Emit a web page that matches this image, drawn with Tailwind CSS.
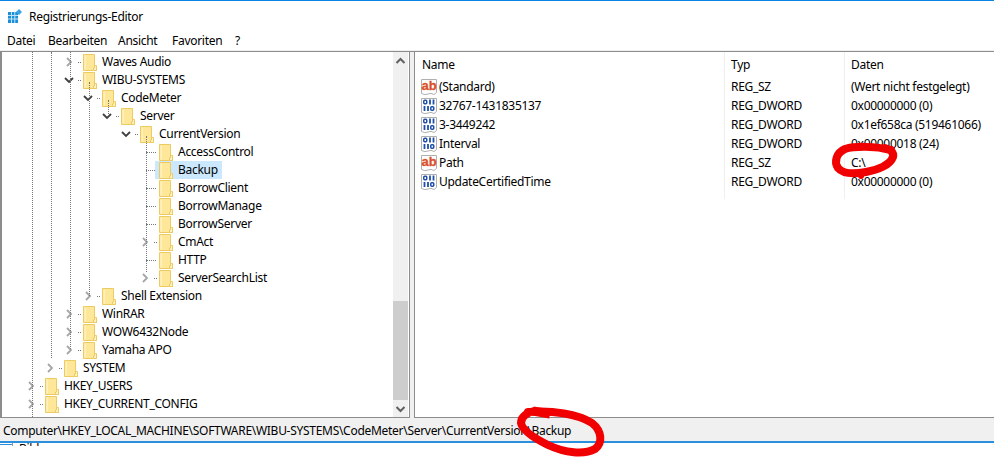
<!doctype html>
<html lang="de"><head><meta charset="utf-8"><title>Registrierungs-Editor</title>
<script src="https://cdn.jsdelivr.net/npm/@tailwindcss/browser@4"></script></head>
<body class="bg-white overflow-hidden">
<svg width="0" height="0" class="absolute"><defs>
<symbol id="f" viewBox="0 0 14 17"><path d="M.5.5H11.5V14H13.5V16.5H.5Z" fill="#ffe79a" stroke="#eccb62"/><path d="M11.5 11.5H13.5V16.5H10.5V14H11.5Z" fill="#fff3c4" stroke="#eccb62"/><path d="M1.5 1.5H3V15.5H1.5Z" fill="#fff2c0"/></symbol>
<symbol id="r" viewBox="0 0 12 12"><path d="M4 2L8 6L4 10" fill="none" stroke="#a6a6a6" stroke-width="1.8"/></symbol>
<symbol id="d" viewBox="0 0 12 12"><path d="M2 4L6 8L10 4" fill="none" stroke="#404040" stroke-width="1.8"/></symbol>
<symbol id="ab" viewBox="0 0 16 16"><path d="M.5 .5H15.500V13.500L13 15.500Q10 13.500 7 15T.5 14.500Z" fill="#fff" stroke="#b0b0b0"/><text x="8" y="10.500" text-anchor="middle" letter-spacing="0" font-family="Liberation Sans" font-weight="700" font-size="13" stroke="#d9512c" stroke-width="0.300" fill="#d9512c">ab</text></symbol>
<symbol id="b" viewBox="0 0 16 16"><path d="M.5 .5H15.500V13.500L13 15.500Q10 13.500 7 15T.5 14.500Z" fill="#fff" stroke="#b0b0b0"/><rect x="2.750" y="2.250" width="3" height="3.500" rx="1" fill="none" stroke="#1f4fa8" stroke-width="1.500"/><path d="M9 1.500V6.500M12.500 1.500V6.500M3.500 8V13M7 8V13" fill="none" stroke="#1f4fa8" stroke-width="1.800"/><rect x="9.750" y="8.750" width="3" height="3.500" rx="1" fill="none" stroke="#1f4fa8" stroke-width="1.500"/></symbol>
</defs></svg>
<div class="relative w-[994px] h-[458px] flex flex-col text-[12px] leading-[18px] tracking-[-0.29px] text-[#000] font-['Noto_Sans','Liberation_Sans',sans-serif]">
  <div class="h-px bg-[#0a84e0]"></div>
  <header class="h-[31px] flex items-center pl-2 gap-[7px]">
    <svg width="14" height="15" viewBox="0 0 14 15"><path d="M0 3H10V14H0Z" fill="#1c8fd8"/><path d="M3.500 3V14M6.800 3V14M0 6.500H10M0 10H10" stroke="#bfe4f8" stroke-width="1"/><path d="M11 0L14 3L11 6L8 3Z" fill="#3aa3e3"/></svg>
    <span>Registrierungs-Editor</span>
  </header>
  <nav class="h-[18px] flex items-center pl-[7px]">
    <span class="w-[41px]">Datei</span><span class="w-[70px]">Bearbeiten</span><span class="w-[54px]">Ansicht</span><span class="w-[63px]">Favoriten</span><span>?</span>
  </nav>
  <div class="h-px bg-[#f0f0f0]"></div>
  <main class="h-[367px] flex border-t border-[#8c8c8c] bg-[#f0f0f0]">
    <section class="relative w-[410px] bg-white border-l-2 border-r border-b border-[#8c8c8c] overflow-hidden">
      <div class="absolute top-0 left-[30px] h-[365px] border-l border-dotted border-[#777]"></div>
      <div class="absolute top-0 left-[49px] h-[306px] border-l border-dotted border-[#777]"></div>
      <div class="absolute top-0 left-[68px] h-[297px] border-l border-dotted border-[#777]"></div>
      <div class="absolute top-[30px] left-[87px] h-[214px] border-l border-dotted border-[#777]"></div>
      <div class="absolute top-[48px] left-[106px] h-[16px] border-l border-dotted border-[#777]"></div>
      <div class="absolute top-[84px] left-[144px] h-[136px] border-l border-dotted border-[#777]"></div>
      <div class="flex flex-col pt-px">
        <div class="h-[18px] flex items-center pl-[61px]"><svg class="w-3 h-3"><use href="#r"/></svg><i class="w-[3px] ml-[3px] border-t border-dotted border-[#777]"></i><svg class="w-[14px] h-[17px] ml-[2px]"><use href="#f"/></svg><span class="ml-[5px]">Waves Audio</span></div>
        <div class="h-[18px] flex items-center pl-[61px]"><svg class="w-3 h-3"><use href="#d"/></svg><i class="w-[3px] ml-[3px] border-t border-dotted border-[#777]"></i><svg class="w-[14px] h-[17px] ml-[2px]"><use href="#f"/></svg><span class="ml-[5px]">WIBU-SYSTEMS</span></div>
        <div class="h-[18px] flex items-center pl-[80px]"><svg class="w-3 h-3"><use href="#d"/></svg><i class="w-[3px] ml-[3px] border-t border-dotted border-[#777]"></i><svg class="w-[14px] h-[17px] ml-[2px]"><use href="#f"/></svg><span class="ml-[5px]">CodeMeter</span></div>
        <div class="h-[18px] flex items-center pl-[99px]"><svg class="w-3 h-3"><use href="#d"/></svg><i class="w-[3px] ml-[3px] border-t border-dotted border-[#777]"></i><svg class="w-[14px] h-[17px] ml-[2px]"><use href="#f"/></svg><span class="ml-[5px]">Server</span></div>
        <div class="h-[18px] flex items-center pl-[118px]"><svg class="w-3 h-3"><use href="#d"/></svg><i class="w-[3px] ml-[3px] border-t border-dotted border-[#777]"></i><svg class="w-[14px] h-[17px] ml-[2px]"><use href="#f"/></svg><span class="ml-[5px]">CurrentVersion</span></div>
        <div class="h-[18px] flex items-center pl-[144px]"><i class="w-[10px] border-t border-dotted border-[#777]"></i><svg class="w-[14px] h-[17px] ml-[3px]"><use href="#f"/></svg><span class="ml-[5px]">AccessControl</span></div>
        <div class="h-[18px] flex items-center pl-[144px]"><i class="w-[9px] border-t border-dotted border-[#777]"></i><span class="flex items-center bg-[#cce8ff] h-[18px] pl-[4px] pr-[4px]"><svg class="w-[14px] h-[17px]"><use href="#f"/></svg><span class="ml-[5px]">Backup</span></span></div>
        <div class="h-[18px] flex items-center pl-[144px]"><i class="w-[10px] border-t border-dotted border-[#777]"></i><svg class="w-[14px] h-[17px] ml-[3px]"><use href="#f"/></svg><span class="ml-[5px]">BorrowClient</span></div>
        <div class="h-[18px] flex items-center pl-[144px]"><i class="w-[10px] border-t border-dotted border-[#777]"></i><svg class="w-[14px] h-[17px] ml-[3px]"><use href="#f"/></svg><span class="ml-[5px]">BorrowManage</span></div>
        <div class="h-[18px] flex items-center pl-[144px]"><i class="w-[10px] border-t border-dotted border-[#777]"></i><svg class="w-[14px] h-[17px] ml-[3px]"><use href="#f"/></svg><span class="ml-[5px]">BorrowServer</span></div>
        <div class="h-[18px] flex items-center pl-[137px]"><svg class="w-3 h-3"><use href="#r"/></svg><i class="w-[3px] ml-[3px] border-t border-dotted border-[#777]"></i><svg class="w-[14px] h-[17px] ml-[2px]"><use href="#f"/></svg><span class="ml-[5px]">CmAct</span></div>
        <div class="h-[18px] flex items-center pl-[144px]"><i class="w-[10px] border-t border-dotted border-[#777]"></i><svg class="w-[14px] h-[17px] ml-[3px]"><use href="#f"/></svg><span class="ml-[5px]">HTTP</span></div>
        <div class="h-[18px] flex items-center pl-[137px]"><svg class="w-3 h-3"><use href="#r"/></svg><i class="w-[3px] ml-[3px] border-t border-dotted border-[#777]"></i><svg class="w-[14px] h-[17px] ml-[2px]"><use href="#f"/></svg><span class="ml-[5px]">ServerSearchList</span></div>
        <div class="h-[18px] flex items-center pl-[80px]"><svg class="w-3 h-3"><use href="#r"/></svg><i class="w-[3px] ml-[3px] border-t border-dotted border-[#777]"></i><svg class="w-[14px] h-[17px] ml-[2px]"><use href="#f"/></svg><span class="ml-[5px]">Shell Extension</span></div>
        <div class="h-[18px] flex items-center pl-[61px]"><svg class="w-3 h-3"><use href="#r"/></svg><i class="w-[3px] ml-[3px] border-t border-dotted border-[#777]"></i><svg class="w-[14px] h-[17px] ml-[2px]"><use href="#f"/></svg><span class="ml-[5px]">WinRAR</span></div>
        <div class="h-[18px] flex items-center pl-[61px]"><svg class="w-3 h-3"><use href="#r"/></svg><i class="w-[3px] ml-[3px] border-t border-dotted border-[#777]"></i><svg class="w-[14px] h-[17px] ml-[2px]"><use href="#f"/></svg><span class="ml-[5px]">WOW6432Node</span></div>
        <div class="h-[18px] flex items-center pl-[61px]"><svg class="w-3 h-3"><use href="#r"/></svg><i class="w-[3px] ml-[3px] border-t border-dotted border-[#777]"></i><svg class="w-[14px] h-[17px] ml-[2px]"><use href="#f"/></svg><span class="ml-[5px]">Yamaha APO</span></div>
        <div class="h-[18px] flex items-center pl-[42px]"><svg class="w-3 h-3"><use href="#r"/></svg><i class="w-[3px] ml-[3px] border-t border-dotted border-[#777]"></i><svg class="w-[14px] h-[17px] ml-[2px]"><use href="#f"/></svg><span class="ml-[5px]">SYSTEM</span></div>
        <div class="h-[18px] flex items-center pl-[23px]"><svg class="w-3 h-3"><use href="#r"/></svg><i class="w-[3px] ml-[3px] border-t border-dotted border-[#777]"></i><svg class="w-[14px] h-[17px] ml-[2px]"><use href="#f"/></svg><span class="ml-[5px]">HKEY_USERS</span></div>
        <div class="h-[18px] flex items-center pl-[23px]"><svg class="w-3 h-3"><use href="#r"/></svg><i class="w-[3px] ml-[3px] border-t border-dotted border-[#777]"></i><svg class="w-[14px] h-[17px] ml-[2px]"><use href="#f"/></svg><span class="ml-[5px]">HKEY_CURRENT_CONFIG</span></div>
      </div>
      <div class="absolute top-0 right-px bottom-0 w-[15px] bg-[#f0f0f0] flex flex-col items-center justify-between">
        <svg class="w-[15px] h-[17px] mt-px" viewBox="0 0 15 17"><path d="M3.500 10L7.500 6L11.500 10" fill="none" stroke="#606060" stroke-width="2"/></svg>
        <div class="absolute top-[249px] left-0 w-full h-[99px] bg-[#cdcdcd]"></div>
        <svg class="w-[15px] h-[17px]" viewBox="0 0 15 17"><path d="M3.500 7L7.500 11L11.500 7" fill="none" stroke="#606060" stroke-width="2"/></svg>
      </div>
    </section>
    <section class="relative w-[580px] ml-[4px] grow bg-white border-l border-b border-[#8c8c8c]">
      <div class="absolute top-0 left-[309px] h-[147px] border-l border-[#f0f0f0]"></div>
      <div class="absolute top-0 left-[429px] h-[147px] border-l border-[#f0f0f0]"></div>
      <div class="grid grid-cols-[309px_120px_1fr] h-[25px] items-center">
        <span class="pl-[7px]">Name</span><span class="pl-[7px]">Typ</span><span class="pl-[7px]">Daten</span>
      </div>
      <div class="grid grid-cols-[309px_120px_1fr] auto-rows-[19px] items-center">
        <span class="flex items-center pl-[6px]"><svg class="w-4 h-4"><use href="#ab"/></svg><span class="ml-[2px]">(Standard)</span></span><span class="pl-[7px]">REG_SZ</span><span class="pl-[7px]">(Wert nicht festgelegt)</span>
        <span class="flex items-center pl-[6px]"><svg class="w-4 h-4"><use href="#b"/></svg><span class="ml-[2px]">32767-1431835137</span></span><span class="pl-[7px]">REG_DWORD</span><span class="pl-[7px]">0x00000000 (0)</span>
        <span class="flex items-center pl-[6px]"><svg class="w-4 h-4"><use href="#b"/></svg><span class="ml-[2px]">3-3449242</span></span><span class="pl-[7px]">REG_DWORD</span><span class="pl-[7px]">0x1ef658ca (519461066)</span>
        <span class="flex items-center pl-[6px]"><svg class="w-4 h-4"><use href="#b"/></svg><span class="ml-[2px]">Interval</span></span><span class="pl-[7px]">REG_DWORD</span><span class="pl-[7px]">0x00000018 (24)</span>
        <span class="flex items-center pl-[6px]"><svg class="w-4 h-4"><use href="#ab"/></svg><span class="ml-[2px]">Path</span></span><span class="pl-[7px]">REG_SZ</span><span class="pl-[7px]">C:\</span>
        <span class="flex items-center pl-[6px]"><svg class="w-4 h-4"><use href="#b"/></svg><span class="ml-[2px]">UpdateCertifiedTime</span></span><span class="pl-[7px]">REG_DWORD</span><span class="pl-[7px]">0x00000000 (0)</span>
      </div>
    </section>
  </main>
  <footer class="h-[25px] bg-[#f0f0f0] border-b-[2px] border-[#2a8fdc] flex items-center pl-[3px] pt-[3px]">Computer\HKEY_LOCAL_MACHINE\SOFTWARE\WIBU-SYSTEMS\CodeMeter\Server\CurrentVersion\Backup</footer>
  <div class="h-[3px] flex items-start overflow-hidden"><i class="w-[12px] h-px mt-px bg-[#2a8fdc]"></i><i class="w-px h-[3px] bg-[#999]"></i><span class="ml-[6px] -mt-[3px]">Bild</span></div>
  <div class="grow bg-white"></div>
  <svg class="absolute inset-0 pointer-events-none" width="994" height="458" viewBox="0 0 994 458" fill="none" stroke="#f00000" stroke-linecap="round" stroke-linejoin="round">
    <path d="M891 150C875 146 855 146 845 149C836 153 834 162 838 168C843 174 855 174 866 172C878 170 890 165 893 157C894 153 891 150 885 148" stroke-width="8"/>
    <path d="M860 172L861 176" stroke-width="6"/>
    <path d="M528 412C552 410 578 414 592 423C602 431 603 443 595 449C584 455 565 453 548 445C534 438 522 430 521 423C521 417 527 413 534 411" stroke-width="8"/>
    <path d="M533 411L550 414" stroke-width="9" stroke-linecap="butt"/>
  </svg>
</div>
</body></html>
